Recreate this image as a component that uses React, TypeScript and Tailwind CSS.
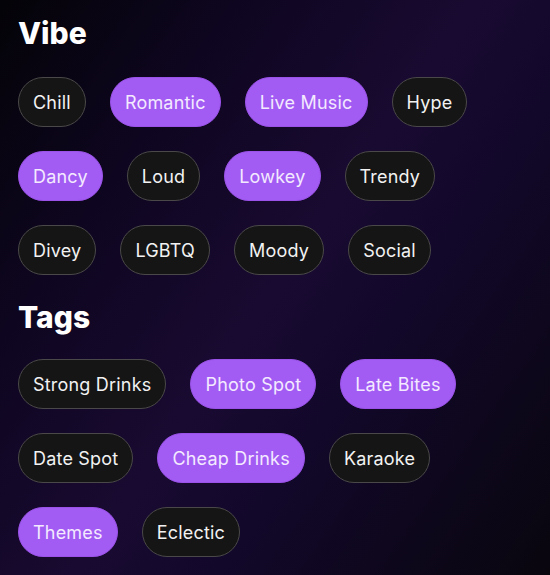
const vibes: [string, boolean][] = [
  ['Chill', false],
  ['Romantic', true],
  ['Live Music', true],
  ['Hype', false],
  ['Dancy', true],
  ['Loud', false],
  ['Lowkey', true],
  ['Trendy', false],
  ['Divey', false],
  ['LGBTQ', false],
  ['Moody', false],
  ['Social', false],
];

const tags: [string, boolean][] = [
  ['Strong Drinks', false],
  ['Photo Spot', true],
  ['Late Bites', true],
  ['Date Spot', false],
  ['Cheap Drinks', true],
  ['Karaoke', false],
  ['Themes', true],
  ['Eclectic', false],
];

const Pill = ({ label, active }: { label: string; active: boolean }) => (
  <span
    className={
      active
        ? 'h-[50px] px-[14px] flex items-center rounded-full border border-[#9a52e8] bg-[#a35cf3] text-[#f3eaff] text-[18px] tracking-[0.2px]'
        : 'h-[50px] px-[14px] flex items-center rounded-full border-[1.5px] border-[#4a4848] bg-[#151515] text-[#f2f2f2] text-[18px] tracking-[0.2px]'
    }
  >
    {label}
  </span>
);

const Section = ({ title, items, mb }: { title: string; items: [string, boolean][]; mb: string }) => (
  <div>
    <h2 className={`text-[30px] leading-[36px] font-extrabold text-white ${mb}`}>{title}</h2>
    <div className="flex flex-wrap gap-x-[24px] gap-y-[24px] pr-[60px]">
      {items.map(([l, a]) => (
        <Pill key={l} label={l} active={a} />
      ))}
    </div>
  </div>
);

export default function App() {
  return (
    <div
      className="w-[550px] h-[575px] overflow-hidden bg-[linear-gradient(125deg,#040307_0%,#0e0620_25%,#190a31_50%,#12082a_65%,#09060e_100%)] px-[18px] pt-[15px] flex flex-col gap-[24px]"
      style={{ fontFamily: 'Inter, "Noto Sans", sans-serif' }}
    >
      <Section title="Vibe" items={vibes} mb="mb-[26px]" />
      <Section title="Tags" items={tags} mb="mb-[24px]" />
    </div>
  );
}
